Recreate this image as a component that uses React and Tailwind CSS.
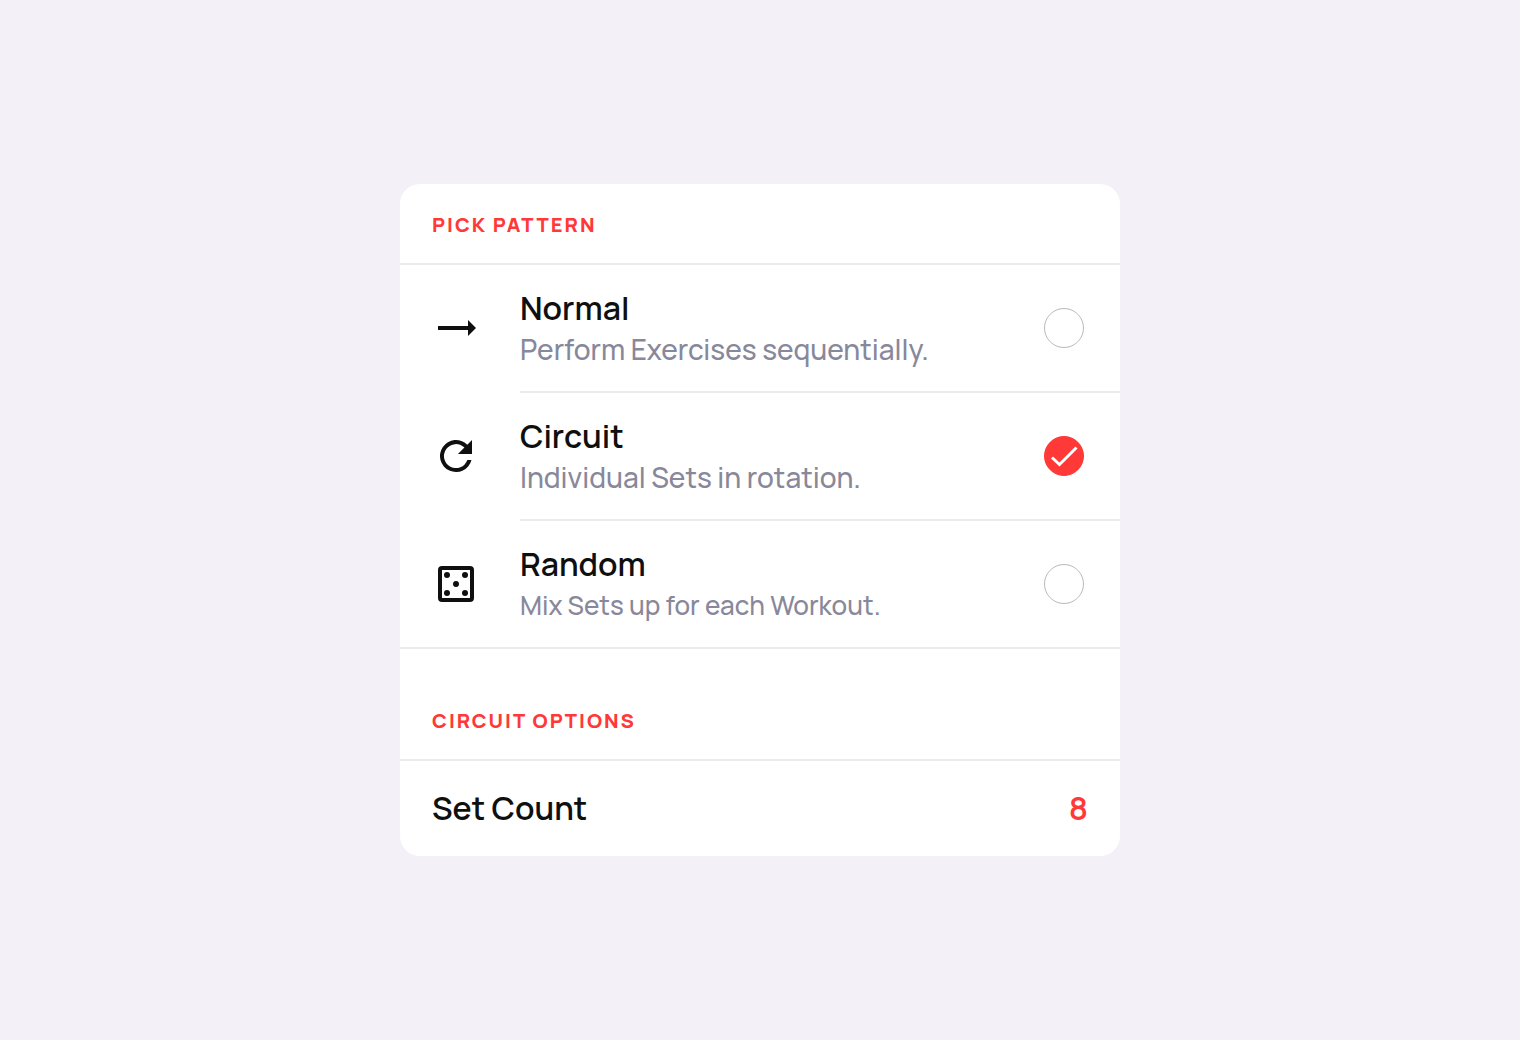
import { useState } from "react";

function ArrowIcon() {
  return (
    <svg viewBox="0 0 48 48" className="size-12 shrink-0" fill="currentColor" aria-hidden="true">
      <path d="M6 22H36V16L44 24L36 32V26H6Z" />
    </svg>
  );
}

function RotateIcon() {
  return (
    <svg viewBox="0 0 48 48" className="size-12 shrink-0" fill="currentColor" aria-hidden="true">
      <path d="M40 8V22H26L32.4 15.6A12 12 0 1 0 35.3 28H39.5A16 16 0 1 1 35.3 12.7Z" />
    </svg>
  );
}

function DiceIcon() {
  return (
    <svg viewBox="0 0 48 48" className="size-12 shrink-0" fill="currentColor" aria-hidden="true">
      <path fillRule="evenodd" d="M10 6H38A4 4 0 0 1 42 10V38A4 4 0 0 1 38 42H10A4 4 0 0 1 6 38V10A4 4 0 0 1 10 6ZM10 10V38H38V10Z" />
      <circle cx="15" cy="15" r="3" />
      <circle cx="33" cy="15" r="3" />
      <circle cx="24" cy="24" r="3" />
      <circle cx="15" cy="33" r="3" />
      <circle cx="33" cy="33" r="3" />
    </svg>
  );
}

const patterns = [
  { id: "normal", title: "Normal", text: "Perform Exercises sequentially.", Icon: ArrowIcon, size: "text-[28px]" },
  { id: "circuit", title: "Circuit", text: "Individual Sets in rotation.", Icon: RotateIcon, size: "text-[28px]" },
  { id: "random", title: "Random", text: "Mix Sets up for each Workout.", Icon: DiceIcon, size: "text-[26px]" },
];

function PatternRow({ pattern, last, checked, onSelect }) {
  const { id, title, text, Icon, size } = pattern;
  return (
    <label htmlFor={id} className={`flex cursor-pointer items-stretch gap-10 pl-8 ${last ? "border-b-2 border-[#ebebeb]" : ""}`}>
      <span className={`flex items-center ${last ? "" : "pb-[2px]"}`}>
        <Icon />
      </span>
      <span className={`flex flex-1 items-center justify-between py-[22px] pr-9 ${last ? "" : "border-b-2 border-[#ebebeb]"}`}>
        <span className="flex flex-col">
          <span className="text-[32px] leading-[42px] font-semibold">{title}</span>
          <span className={`leading-10 font-medium text-[#88889b] ${size}`}>{text}</span>
        </span>
        <span className="relative flex size-10 shrink-0">
          <input
            id={id}
            type="radio"
            name="pattern"
            checked={checked}
            onChange={onSelect}
            className="size-10 cursor-pointer appearance-none rounded-full border border-[#b8b8c0] checked:border-[#ff3838] checked:bg-[#ff3838]"
          />
          {checked && (
            <svg viewBox="0 0 40 40" className="pointer-events-none absolute inset-0 size-10" fill="none" stroke="white" strokeWidth="3" aria-hidden="true">
              <path d="M8 21.5L15.5 28.5L32.5 11.5" />
            </svg>
          )}
        </span>
      </span>
    </label>
  );
}

function Heading({ children }) {
  return <h2 className="text-[20px] leading-8 font-extrabold tracking-widest text-[#ff3838]">{children}</h2>;
}

export default function App() {
  const [selected, setSelected] = useState("circuit");
  const [count, setCount] = useState("8");
  return (
    <main className="flex min-h-screen items-center justify-center bg-[#f3f0f8] font-['Manrope','Inter',sans-serif] text-[#0f0f10]">
      <form className="w-full max-w-[720px] overflow-hidden rounded-[20px] bg-white">
        <div className="border-b-2 border-[#ebebeb] px-8 pt-[25px] pb-[22px]">
          <Heading>PICK PATTERN</Heading>
        </div>
        {patterns.map((p, i) => (
          <PatternRow key={p.id} pattern={p} last={i === patterns.length - 1} checked={selected === p.id} onSelect={() => setSelected(p.id)} />
        ))}
        <div className="border-b-2 border-[#ebebeb] px-8 pt-14 pb-[22px]">
          <Heading>CIRCUIT OPTIONS</Heading>
        </div>
        <div className="flex items-center justify-between px-8 pt-[27px] pb-7 text-[32px] leading-10 font-semibold">
          <label htmlFor="set-count">Set Count</label>
          <input
            id="set-count"
            type="text"
            inputMode="numeric"
            value={count}
            onChange={(e) => setCount(e.target.value)}
            className="h-10 w-24 bg-transparent text-right text-[#ff3838] outline-none"
          />
        </div>
      </form>
    </main>
  );
}
